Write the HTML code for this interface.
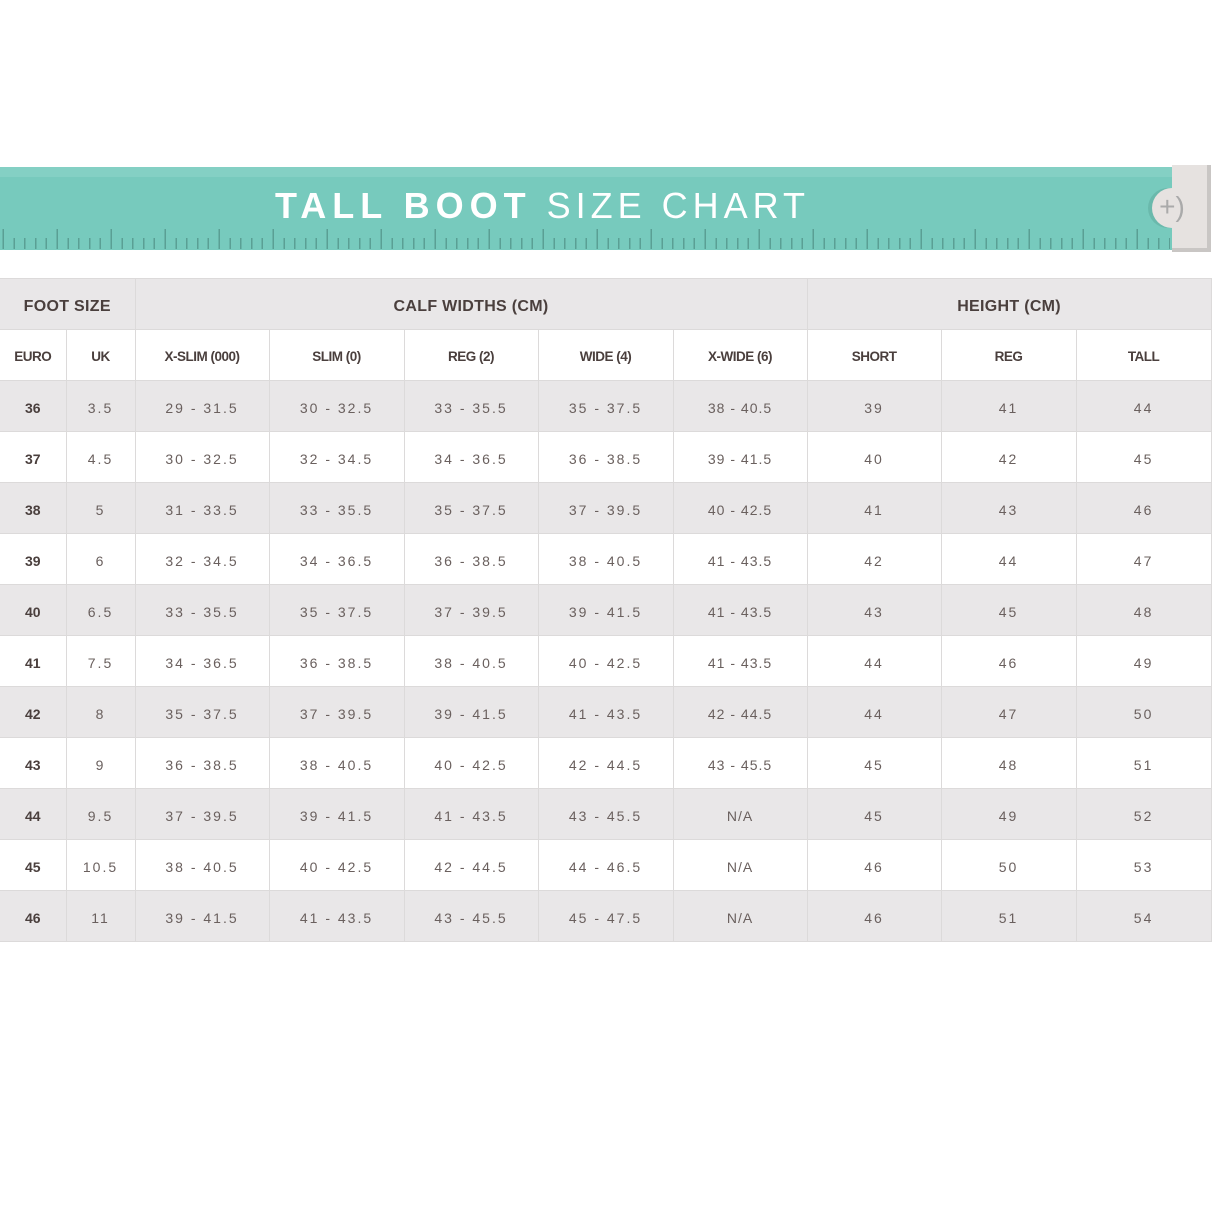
<!DOCTYPE html>
<html><head><meta charset="utf-8"><style>
body{margin:0;width:1214px;height:1213px;background:#fff;position:relative;overflow:hidden;font-family:"Liberation Sans",sans-serif}
.band{position:absolute;left:0;top:167px;width:1172px;height:83px;background:#77cabd}
.band .lt{position:absolute;left:0;top:0;width:100%;height:10px;background:#84d0c4}
.minor{position:absolute;left:0;top:238px;width:1170px;height:11px;background:repeating-linear-gradient(90deg,transparent 0 2.5px,#5a9f94 2.5px 4px,transparent 4px 10.8px)}
.major{position:absolute;left:0;top:229px;width:1170px;height:20px;background:repeating-linear-gradient(90deg,transparent 0 2.5px,#5a9f94 2.5px 4px,transparent 4px 54px)}
.title{position:absolute;left:0;width:1085px;top:185px;text-align:center;color:#fff;font-size:36px;letter-spacing:5px;line-height:42px}
.cap{position:absolute;left:1172px;top:165px;width:35px;height:83px;background:#e6e2e0;border-right:4px solid #c9c6c4;border-bottom:4px solid #c9c6c4}
.knob{position:absolute;left:1152px;top:188px;width:40px;height:40px;border-radius:50%;background:#e6e2e0;box-shadow:-4px 0 0 #6ab9ac;color:#aaa;font-size:28px;line-height:38px;text-align:center}
table{position:absolute;left:0;top:278px;border-collapse:collapse;table-layout:fixed;width:1211px}
td{border:1px solid #dcdada;height:47px;text-align:center;color:#6a605e;font-size:14px;letter-spacing:2px;padding:3px 0 0}
tr.g td{background:#e9e7e8}
tr.h td{font-weight:bold;letter-spacing:-0.5px;font-size:13.5px;color:#4a3f3d}
tr.t td{font-size:16px;letter-spacing:0.3px;color:#4a3f3d;font-weight:bold;padding-top:6px;height:44px}
td.b{font-weight:bold;letter-spacing:0;color:#4a3f3d}
td.x{letter-spacing:1px}
td:first-child{border-left:none}
</style></head><body>
<div class="band"><div class="lt"></div></div>
<div class="minor"></div><div class="major"></div>
<div class="title"><b style="letter-spacing:6px">TALL BOOT</b> SIZE CHART</div>
<div class="cap"></div>
<div class="knob">+)</div>
<table>
<colgroup><col style="width:66px"><col style="width:69px"><col style="width:134px"><col style="width:135px"><col style="width:134px"><col style="width:135px"><col style="width:134px"><col style="width:134px"><col style="width:135px"><col style="width:135px"></colgroup>
<tr class="g t"><td colspan="2">FOOT SIZE</td><td colspan="5">CALF WIDTHS (CM)</td><td colspan="3">HEIGHT (CM)</td></tr>
<tr class="h"><td>EURO</td><td>UK</td><td>X-SLIM (000)</td><td>SLIM (0)</td><td>REG (2)</td><td>WIDE (4)</td><td>X-WIDE (6)</td><td>SHORT</td><td>REG</td><td>TALL</td></tr>
<tr class="g"><td class="b">36</td><td>3.5</td><td>29 - 31.5</td><td>30 - 32.5</td><td>33 - 35.5</td><td>35 - 37.5</td><td class="x">38 - 40.5</td><td>39</td><td>41</td><td>44</td></tr>
<tr><td class="b">37</td><td>4.5</td><td>30 - 32.5</td><td>32 - 34.5</td><td>34 - 36.5</td><td>36 - 38.5</td><td class="x">39 - 41.5</td><td>40</td><td>42</td><td>45</td></tr>
<tr class="g"><td class="b">38</td><td>5</td><td>31 - 33.5</td><td>33 - 35.5</td><td>35 - 37.5</td><td>37 - 39.5</td><td class="x">40 - 42.5</td><td>41</td><td>43</td><td>46</td></tr>
<tr><td class="b">39</td><td>6</td><td>32 - 34.5</td><td>34 - 36.5</td><td>36 - 38.5</td><td>38 - 40.5</td><td class="x">41 - 43.5</td><td>42</td><td>44</td><td>47</td></tr>
<tr class="g"><td class="b">40</td><td>6.5</td><td>33 - 35.5</td><td>35 - 37.5</td><td>37 - 39.5</td><td>39 - 41.5</td><td class="x">41 - 43.5</td><td>43</td><td>45</td><td>48</td></tr>
<tr><td class="b">41</td><td>7.5</td><td>34 - 36.5</td><td>36 - 38.5</td><td>38 - 40.5</td><td>40 - 42.5</td><td class="x">41 - 43.5</td><td>44</td><td>46</td><td>49</td></tr>
<tr class="g"><td class="b">42</td><td>8</td><td>35 - 37.5</td><td>37 - 39.5</td><td>39 - 41.5</td><td>41 - 43.5</td><td class="x">42 - 44.5</td><td>44</td><td>47</td><td>50</td></tr>
<tr><td class="b">43</td><td>9</td><td>36 - 38.5</td><td>38 - 40.5</td><td>40 - 42.5</td><td>42 - 44.5</td><td class="x">43 - 45.5</td><td>45</td><td>48</td><td>51</td></tr>
<tr class="g"><td class="b">44</td><td>9.5</td><td>37 - 39.5</td><td>39 - 41.5</td><td>41 - 43.5</td><td>43 - 45.5</td><td class="x">N/A</td><td>45</td><td>49</td><td>52</td></tr>
<tr><td class="b">45</td><td>10.5</td><td>38 - 40.5</td><td>40 - 42.5</td><td>42 - 44.5</td><td>44 - 46.5</td><td class="x">N/A</td><td>46</td><td>50</td><td>53</td></tr>
<tr class="g"><td class="b">46</td><td>11</td><td>39 - 41.5</td><td>41 - 43.5</td><td>43 - 45.5</td><td>45 - 47.5</td><td class="x">N/A</td><td>46</td><td>51</td><td>54</td></tr>
</table>
</body></html>
